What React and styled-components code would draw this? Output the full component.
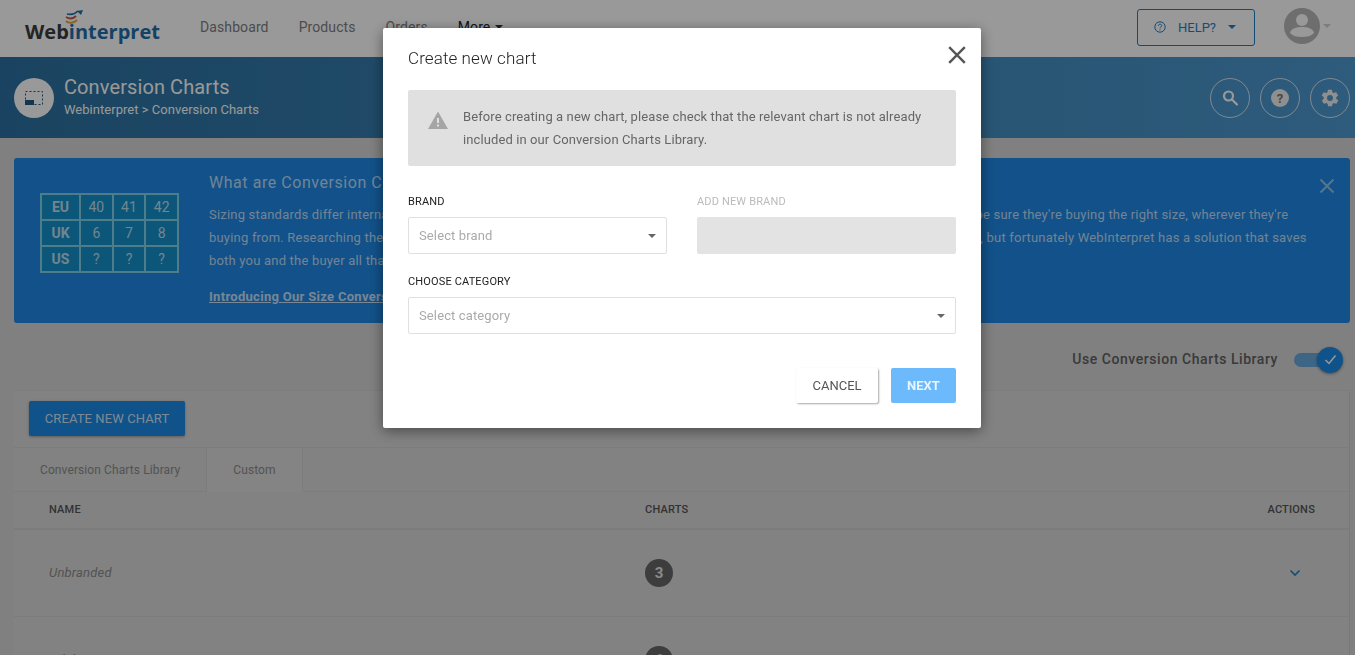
import React from "react";
import styled, { createGlobalStyle } from "styled-components";

const Global = createGlobalStyle`
  html, body { margin: 0; padding: 0; height: 100%; overflow: hidden; }
  body { background: #d5d5d5; font-family: Roboto, "Liberation Sans", sans-serif; color: #444; }
  * { box-sizing: border-box; }
`;

const Page = styled.div`
  height: 655px;
  overflow: hidden;
`;

const Header = styled.header`
  height: 57px;
  background: #fff;
  display: flex;
  align-items: center;
  padding: 0 24px 0 25px;
`;

const LogoWrap = styled.div`
  position: relative;
  width: 135px;
  height: 44px;
  flex: none;
  display: flex;
  align-items: flex-end;
`;

const LogoMark = styled.svg`
  position: absolute;
  left: 40px;
  top: 3px;
  width: 19px;
  height: 15px;
`;

const LogoText = styled.div`
  font-family: "Open Sans", sans-serif;
  font-weight: 700;
  font-size: 20px;
  line-height: 26px;
  margin-bottom: 6px;
  color: #3d3d3d;
  white-space: nowrap;
  span { color: #1f6ea8; }
`;

const Nav = styled.nav`
  display: flex;
  gap: 30px;
  margin-left: 40px;
  margin-top: -3px;
  flex: 1;
`;

const NavItem = styled.a`
  font-size: 14px;
  color: ${(p) => (p.$strong ? "#222" : "#808080")};
  letter-spacing: 0.1px;
  display: flex;
  align-items: center;
  gap: 5px;
`;

const Caret = styled.i`
  display: inline-block;
  width: 0;
  height: 0;
  border-left: ${(p) => p.$s || 4}px solid transparent;
  border-right: ${(p) => p.$s || 4}px solid transparent;
  border-top: ${(p) => p.$s || 4}px solid ${(p) => p.$c || "#333"};
`;

const HelpButton = styled.button`
  width: 118px;
  height: 37px;
  margin-top: -3px;
  border: 1px solid #1f7fc8;
  border-radius: 3px;
  background: transparent;
  color: #1f7fc8;
  font: 400 13px Roboto, sans-serif;
  display: flex;
  align-items: center;
  padding: 0 0 0 16px;
  gap: 12px;
`;

const Avatar = styled.div`
  margin-left: 29px;
  margin-top: -5px;
  display: flex;
  align-items: center;
  gap: 3px;
  svg { display: block; }
`;

const TitleBar = styled.section`
  height: 81px;
  background: linear-gradient(90deg, #2b71a0, #4e99cf);
  display: flex;
  align-items: center;
  padding: 0 5px 0 14px;
  color: #fff;
`;

const TitleIcon = styled.div`
  width: 40px;
  height: 40px;
  border-radius: 50%;
  background: #fff;
  display: flex;
  align-items: center;
  justify-content: center;
  margin-right: 10px;
  flex: none;
`;

const TitleText = styled.div`
  flex: 1;
  margin-bottom: 2px;
  h1 { margin: 0 0 2px; font-size: 20px; font-weight: 400; line-height: 24px; letter-spacing: 0.1px; }
  p { margin: 0; font-size: 13px; line-height: 18px; letter-spacing: 0.03px; }
`;

const RoundGroup = styled.div`
  display: flex;
  gap: 10px;
`;

const RoundButton = styled.div`
  width: 40px;
  height: 40px;
  border: 1px solid rgba(255, 255, 255, 0.75);
  border-radius: 50%;
  display: flex;
  align-items: center;
  justify-content: center;
`;

const Banner = styled.section`
  position: relative;
  margin: 20px 5px 0 14px;
  height: 165px;
  background: #1e88e5;
  border-radius: 3px;
  display: flex;
  padding: 35px 0 0 26px;
  color: rgba(255, 255, 255, 0.72);
`;

const SizeTable = styled.table`
  border-collapse: collapse;
  width: 139px;
  height: 80px;
  table-layout: fixed;
  flex: none;
  color: rgba(255, 255, 255, 0.72);
  font-size: 14px;
  td {
    border: 2px solid #80d0e8;
    background: #1590cc;
    text-align: center;
    padding: 0;
  }
  td:first-child { font-weight: 700; width: 39px; }
`;

const BannerBody = styled.div`
  margin-left: 30px;
  margin-top: -22px;
  h2 { margin: 0 0 8px; font-size: 16px; font-weight: 400; line-height: 24px; letter-spacing: 0.55px; }
  a { display: block; margin-top: 15px; font-size: 13px; font-weight: 700; text-decoration: underline; line-height: 20px; letter-spacing: 0.3px; color: rgba(255,255,255,.75); }
`;

const BannerLine = styled.div`
  font-size: 13px;
  line-height: 23px;
  white-space: nowrap;
  letter-spacing: 0.2px;
`;

const BannerClose = styled.svg`
  position: absolute;
  right: 15px;
  top: 20px;
  width: 16px;
  height: 16px;
`;

const ToggleRow = styled.div`
  display: flex;
  justify-content: flex-end;
  align-items: center;
  height: 67px;
  padding: 5px 25px 0 0;
  gap: 16px;
  font-size: 14px;
  font-weight: 500;
  color: #616161;
  letter-spacing: 0.55px;
`;

const Toggle = styled.div`
  position: relative;
  width: 36px;
  height: 14px;
  background: #6aa9dc;
  border-radius: 7px;
  margin-top: 1px;
`;

const Thumb = styled.div`
  position: absolute;
  right: -13px;
  top: -6px;
  width: 26px;
  height: 26px;
  border-radius: 50%;
  background: #1b8ae6;
  box-shadow: 0 1px 3px rgba(0, 0, 0, 0.4);
  display: flex;
  align-items: center;
  justify-content: center;
`;

const Card = styled.section`
  margin: 0 5px 0 14px;
  background: #d9d9d9;
  border-top: 1px solid #d0d0d0;
  border-right: 1px solid #c9c9c9;
`;

const CardTop = styled.div`
  height: 57px;
  padding: 10px 15px;
  border-bottom: 1px solid #cfcfcf;
`;

const PrimaryButton = styled.button`
  width: 156px;
  height: 35px;
  border: 0;
  border-radius: 2px;
  background: #1b8ae6;
  color: rgba(255, 255, 255, 0.8);
  font: 400 13px Roboto, sans-serif;
  box-shadow: 0 1px 3px rgba(0, 0, 0, 0.3);
  letter-spacing: 0.1px;
`;

const Tabs = styled.div`
  display: flex;
  height: 44px;
  border-bottom: 1px solid #cfcfcf;
`;

const Tab = styled.div`
  padding: 0 26px;
  display: flex;
  align-items: center;
  font-size: 12px;
  color: #8a8a8a;
  letter-spacing: 0.1px;
  border-right: 1px solid #cfcfcf;
  ${(p) => p.$active && `background:#dcdcdc; margin-bottom:-1px; border-bottom:1px solid #dcdcdc;`}
`;

const Grid = styled.div`
  display: grid;
  grid-template-columns: 596px 1fr auto;
  align-items: center;
  padding: 0 34px 0 35px;
`;

const HeadRow = styled(Grid)`
  height: 38px;
  padding-bottom: 2px;
  border-bottom: 2px solid #cfcfcf;
  font-size: 11px;
  font-weight: 500;
  color: #555;
  letter-spacing: 0.2px;
`;

const Row = styled(Grid)`
  height: 87px;
  padding-bottom: 1px;
  border-bottom: 1px solid #cfcfcf;
  font-size: 13px;
  color: #8a8a8a;
  em { letter-spacing: 0.2px; }
`;

const Badge = styled.span`
  width: 28px;
  height: 28px;
  border-radius: 50%;
  background: #666;
  color: #e6e6e6;
  font-size: 15px;
  font-weight: 700;
  display: flex;
  align-items: center;
  justify-content: center;
`;

const Chevron = styled.svg`
  width: 12px;
  height: 8px;
  margin-right: 14px;
  justify-self: end;
`;

const Overlay = styled.div`
  position: fixed;
  inset: 0;
  background: rgba(0, 0, 0, 0.4);
`;

const Modal = styled.div`
  position: fixed;
  left: 383px;
  top: 28px;
  width: 598px;
  height: 400px;
  background: #fff;
  border-radius: 2px;
  box-shadow: 0 3px 14px rgba(0, 0, 0, 0.45);
  padding: 0 25px;
`;

const ModalHead = styled.div`
  height: 62px;
  display: flex;
  align-items: center;
  justify-content: space-between;
  padding-bottom: 2px;
  h3 { margin: 0; font-size: 17px; font-weight: 300; color: #222; letter-spacing: 0.1px; }
`;

const CloseIcon = styled.svg`
  position: absolute;
  right: 15px;
  top: 18px;
  width: 18px;
  height: 18px;
`;

const Alert = styled.div`
  height: 76px;
  background: #e0e0e0;
  border-radius: 2px;
  display: flex;
  align-items: center;
  padding-left: 20px;
  gap: 15px;
  font-size: 13px;
  line-height: 23px;
  color: #666;
  letter-spacing: 0.1px;
  svg { flex: none; margin-top: -16px; }
`;

const FormRow = styled.div`
  display: grid;
  grid-template-columns: ${(p) => (p.$two ? "1fr 1fr" : "1fr")};
  gap: 30px;
  margin-top: ${(p) => p.$mt}px;
`;

const Label = styled.label`
  display: block;
  font-size: 11px;
  line-height: 14px;
  margin-bottom: 8px;
  color: ${(p) => (p.$off ? "#bbb" : "#222")};
  letter-spacing: 0.15px;
`;

const Select = styled.div`
  height: 37px;
  border: 1px solid #e0e0e0;
  border-radius: 2px;
  display: flex;
  align-items: center;
  justify-content: space-between;
  padding: 0 10px;
  font-size: 13px;
  color: #aaa;
  letter-spacing: 0.12px;
`;

const DisabledInput = styled.div`
  height: 37px;
  background: #e3e3e3;
  border-radius: 2px;
`;

const Actions = styled.div`
  display: flex;
  justify-content: flex-end;
  gap: 13px;
  margin-top: 34px;
`;

const CancelButton = styled.button`
  width: 82px;
  height: 35px;
  border: 0;
  border-radius: 2px;
  background: #fff;
  color: #555;
  font: 400 13px Roboto, sans-serif;
  box-shadow: 1px 1px 2px rgba(0, 0, 0, 0.35);
`;

const NextButton = styled.button`
  width: 65px;
  height: 35px;
  border: 0;
  border-radius: 2px;
  background: #6cbafb;
  color: #e8f4ff;
  font: 700 13px Roboto, sans-serif;
`;

export default function App() {
  return (
    <>
      <Global />
      <Page>
        <Header>
          <LogoWrap>
            <LogoMark viewBox="0 0 19 15" fill="none">
              <path d="M1 7c3 2 7 2 10-1" stroke="#c8544a" strokeWidth="2" />
              <path d="M1 11c3 3 8 2 11-1" stroke="#e0a83a" strokeWidth="2" />
              <path d="M2 4c4 1 8 0 11-3" stroke="#1f6ea8" strokeWidth="1.6" />
              <path d="M12 1l6-1-2 5z" fill="#1f6ea8" />
            </LogoMark>
            <LogoText>Web<span>interpret</span></LogoText>
          </LogoWrap>
          <Nav>
            <NavItem>Dashboard</NavItem>
            <NavItem>Products</NavItem>
            <NavItem>Orders</NavItem>
            <NavItem $strong>More <Caret /></NavItem>
          </Nav>
          <HelpButton>
            <svg width="12" height="12" viewBox="0 0 12 12" fill="none" stroke="#1f7fc8">
              <circle cx="6" cy="6" r="5.2" />
              <path d="M4.4 4.8c0-2.1 3.3-2.1 3.3 0 0 1.2-1.7 1.2-1.7 2.4M6 8.3v1" />
            </svg>
            HELP?
            <Caret $c="#1f7fc8" />
          </HelpButton>
          <Avatar>
            <svg width="36" height="36" viewBox="0 0 36 36">
              <circle cx="18" cy="18" r="18" fill="#b8b8b8" />
              <circle cx="18" cy="12" r="6" fill="#fff" />
              <path d="M6 25c1-5 7-6 12-6s11 1 12 6c-3 3-7 4-12 4s-9-1-12-4z" fill="#fff" />
            </svg>
            <Caret $c="#d0d0d0" />
          </Avatar>
        </Header>

        <TitleBar>
          <TitleIcon>
            <svg width="20" height="16" viewBox="0 0 20 16" fill="none">
              <rect x="1.5" y="1.5" width="17" height="13" stroke="#1f5a85" strokeDasharray="2 2" />
              <rect x="1" y="10" width="9" height="5" fill="#1f5a85" />
            </svg>
          </TitleIcon>
          <TitleText>
            <h1>Conversion Charts</h1>
            <p>Webinterpret &gt; Conversion Charts</p>
          </TitleText>
          <RoundGroup>
            <RoundButton>
              <svg width="18" height="18" viewBox="0 0 18 18" fill="none" stroke="#fff" strokeWidth="2.2">
                <circle cx="7.5" cy="7" r="4.5" />
                <path d="M11 10.5l5 5" strokeLinecap="round" />
              </svg>
            </RoundButton>
            <RoundButton>
              <svg width="18" height="18" viewBox="0 0 18 18">
                <circle cx="9" cy="9" r="9" fill="#eee" />
                <text x="9" y="13.5" textAnchor="middle" fontSize="13" fontWeight="700" fontFamily="Roboto" fill="#777">?</text>
              </svg>
            </RoundButton>
            <RoundButton>
              <svg width="20" height="20" viewBox="0 0 24 24" fill="#eee">
                <path d="M19.4 13c.1-.3.1-.7.1-1s0-.7-.1-1l2.1-1.6c.2-.1.2-.4.1-.6l-2-3.5c-.1-.2-.4-.3-.6-.2l-2.5 1c-.5-.4-1.1-.7-1.7-1l-.4-2.6c0-.3-.2-.4-.5-.4h-4c-.2 0-.5.2-.5.4l-.4 2.6c-.6.3-1.2.6-1.7 1l-2.5-1c-.2-.1-.5 0-.6.2l-2 3.5c-.1.2-.1.5.1.6L4.6 11c-.1.3-.1.7-.1 1s0 .7.1 1l-2.1 1.6c-.2.1-.2.4-.1.6l2 3.5c.1.2.4.3.6.2l2.5-1c.5.4 1.1.7 1.7 1l.4 2.6c0 .2.3.4.5.4h4c.3 0 .5-.2.5-.4l.4-2.6c.6-.3 1.2-.6 1.7-1l2.5 1c.2.1.5 0 .6-.2l2-3.5c.1-.2.1-.5-.1-.6L19.4 13zM12 15.5a3.5 3.5 0 1 1 0-7 3.5 3.5 0 0 1 0 7z" />
              </svg>
            </RoundButton>
          </RoundGroup>
        </TitleBar>

        <Banner>
          <SizeTable>
            <tbody>
              <tr><td>EU</td><td>40</td><td>41</td><td>42</td></tr>
              <tr><td>UK</td><td>6</td><td>7</td><td>8</td></tr>
              <tr><td>US</td><td>?</td><td>?</td><td>?</td></tr>
            </tbody>
          </SizeTable>
          <BannerBody>
            <h2>What are Conversion Charts?</h2>
            <BannerLine>Sizing standards differ internationally, which makes shopping for clothes and shoes from abroad a big challenge. Buyers want to be sure they're buying the right size, wherever they're</BannerLine>
            <BannerLine>buying from. Researching the size standards of every country you sell in to would take a great deal of time and be really confusing, but fortunately WebInterpret has a solution that saves</BannerLine>
            <BannerLine>both you and the buyer all that trouble.</BannerLine>
            <a>Introducing Our Size Conversion Charts</a>
          </BannerBody>
          <BannerClose viewBox="0 0 16 16" stroke="#8fc3ee" strokeWidth="2">
            <path d="M1.5 1.5l13 13M14.5 1.5l-13 13" />
          </BannerClose>
        </Banner>

        <ToggleRow>
          Use Conversion Charts Library
          <Toggle>
            <Thumb>
              <svg width="13" height="11" viewBox="0 0 13 11" fill="none" stroke="#fff" strokeWidth="1.5">
                <path d="M1.5 6l3.5 3.5L11.5 1.5" />
              </svg>
            </Thumb>
          </Toggle>
        </ToggleRow>

        <Card>
          <CardTop>
            <PrimaryButton>CREATE NEW CHART</PrimaryButton>
          </CardTop>
          <Tabs>
            <Tab>Conversion Charts Library</Tab>
            <Tab $active>Custom</Tab>
          </Tabs>
          <HeadRow>
            <span>NAME</span>
            <span>CHARTS</span>
            <span>ACTIONS</span>
          </HeadRow>
          <Row>
            <em>Unbranded</em>
            <Badge>3</Badge>
            <Chevron viewBox="0 0 12 8" fill="none" stroke="#1f7fc8" strokeWidth="1.6"><path d="M1.5 1.5L6 6l4.5-4.5" /></Chevron>
          </Row>
          <Row>
            <em>Adidas</em>
            <Badge>6</Badge>
            <Chevron viewBox="0 0 12 8" fill="none" stroke="#1f7fc8" strokeWidth="1.6"><path d="M1.5 1.5L6 6l4.5-4.5" /></Chevron>
          </Row>
        </Card>
      </Page>

      <Overlay />
      <Modal>
        <ModalHead><h3>Create new chart</h3></ModalHead>
        <CloseIcon viewBox="0 0 18 18" stroke="#555" strokeWidth="2.4">
          <path d="M1.2 1.2l15.6 15.6M16.8 1.2L1.2 16.8" />
        </CloseIcon>
        <Alert>
          <svg width="20" height="18" viewBox="0 0 20 18">
            <path d="M10 .5L20 18H0z" fill="#a5a5a5" />
            <rect x="9" y="7" width="2" height="5" fill="#e0e0e0" />
            <rect x="9" y="13.5" width="2" height="2" fill="#e0e0e0" />
          </svg>
          <div>
            Before creating a new chart, please check that the relevant chart is not already<br />
            included in our Conversion Charts Library.
          </div>
        </Alert>
        <FormRow $two $mt={29}>
          <div>
            <Label>BRAND</Label>
            <Select>Select brand <Caret $c="#666" /></Select>
          </div>
          <div>
            <Label $off>ADD NEW BRAND</Label>
            <DisabledInput />
          </div>
        </FormRow>
        <FormRow $mt={21}>
          <div>
            <Label>CHOOSE CATEGORY</Label>
            <Select>Select category <Caret $c="#666" /></Select>
          </div>
        </FormRow>
        <Actions>
          <CancelButton>CANCEL</CancelButton>
          <NextButton>NEXT</NextButton>
        </Actions>
      </Modal>
    </>
  );
}
